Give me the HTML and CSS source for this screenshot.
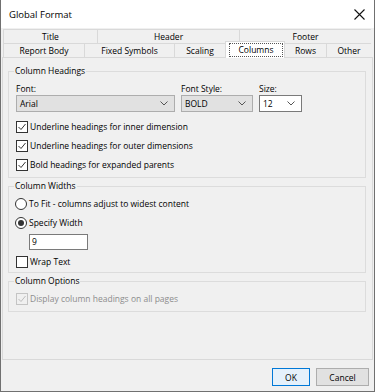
FILE: index.html
```html
<!DOCTYPE html>
<html lang="en">
<head>
	<meta charset="UTF-8">
	<title>Global Format</title>
<link rel="stylesheet" href="styles.css">
</head>
<body>
<div class="dialog">
	<div class="titlebar">
		<span class="title">Global Format</span>
		<svg class="close" width="11" height="11" viewBox="0 0 11 11"><path d="M0.5 0.5L10.5 10.5M10.5 0.5L0.5 10.5" stroke="#111" stroke-width="1.1" fill="none"/></svg>
	</div>

	<div class="tabs">
		<div class="tabrow row1">
			<div class="tab">Title</div>
			<div class="tab">Header</div>
			<div class="tab">Footer</div>
		</div>
		<div class="tabrow row2">
			<div class="tab">Report Body</div>
			<div class="tab">Fixed Symbols</div>
			<div class="tab">Scaling</div>
			<div class="tab active"><span>Columns</span></div>
			<div class="tab">Rows</div>
			<div class="tab">Other</div>
		</div>
	</div>

	<div class="panel">
		<fieldset class="group g1">
			<legend>Column Headings</legend>
			<div class="body">
				<div class="fonts">
					<div class="field">
						<label>Font:</label>
						<div class="combo w-font">Arial<svg class="chev" width="8" height="5" viewBox="0 0 8 5"><path d="M0.5 0.5L4 4L7.5 0.5" stroke="#555" fill="none"/></svg></div>
					</div>
					<div class="field">
						<label>Font Style:</label>
						<div class="combo w-style">BOLD<svg class="chev" width="8" height="5" viewBox="0 0 8 5"><path d="M0.5 0.5L4 4L7.5 0.5" stroke="#555" fill="none"/></svg></div>
					</div>
					<div class="field">
						<label>Size:</label>
						<div class="combo edit w-size">12<svg class="chev" width="8" height="5" viewBox="0 0 8 5"><path d="M0.5 0.5L4 4L7.5 0.5" stroke="#555" fill="none"/></svg></div>
					</div>
				</div>
				<div class="checks">
					<div class="row"><span class="box"><svg width="10" height="10" viewBox="0 0 10 10"><path d="M1.5 5L4 7.5L8.5 2" stroke="#333" stroke-width="1" fill="none"/></svg></span>Underline headings for inner dimension</div>
					<div class="row"><span class="box"><svg width="10" height="10" viewBox="0 0 10 10"><path d="M1.5 5L4 7.5L8.5 2" stroke="#333" stroke-width="1" fill="none"/></svg></span>Underline headings for outer dimensions</div>
					<div class="row"><span class="box"><svg width="10" height="10" viewBox="0 0 10 10"><path d="M1.5 5L4 7.5L8.5 2" stroke="#333" stroke-width="1" fill="none"/></svg></span>Bold headings for expanded parents</div>
				</div>
			</div>
		</fieldset>

		<fieldset class="group g2">
			<legend>Column Widths</legend>
			<div class="body">
				<div class="row"><span class="radio"></span>To Fit - columns adjust to widest content</div>
				<div class="row"><span class="radio on"></span>Specify Width</div>
				<div class="textbox">9</div>
				<div class="row wrap"><span class="box"></span>Wrap Text</div>
			</div>
		</fieldset>

		<fieldset class="group g3">
			<legend>Column Options</legend>
			<div class="body">
				<div class="row disabled"><span class="box"><svg width="10" height="10" viewBox="0 0 10 10"><path d="M1.5 5L4 7.5L8.5 2" stroke="#bdbdbd" stroke-width="1" fill="none"/></svg></span>Display column headings on all pages</div>
			</div>
		</fieldset>
	</div>

	<div class="footer">
		<button class="btn default">OK</button>
		<button class="btn">Cancel</button>
	</div>
</div>
</body>
</html>
```

FILE: styles.css
```css
* { margin:0; padding:0; box-sizing:border-box; }
body { width:375px; height:392px; background:#fff; font-family:"Open Sans", "Noto Sans", sans-serif; font-size:8.5px; color:#000; }

.dialog { width:375px; height:392px; border:1px solid #707070; border-top:0; background:#f0f0f0; display:flex; flex-direction:column; }

.titlebar { height:28px; flex:none; background:#fff; display:flex; align-items:center; justify-content:space-between; padding:0 9px 0 8px; }
.title { font-size:9.5px; }

/* tabs */
.tabs { margin:1px 3px 0 2px; flex:none; }
.tabrow { display:grid; height:14px; border-right:1px solid #d9d9d9; }
.row1 { grid-template-columns:94px 142px 132px; }
.row2 { grid-template-columns:81px 90px 51px 59px 42px 45px; }
.tab { border-top:1px solid #d9d9d9; border-left:1px solid #d9d9d9; display:flex; align-items:center; justify-content:center; line-height:12px; background:#f0f0f0; }
.tab.active { background:#fff; margin:-2px -1px -1px 0; border-right:1px solid #d9d9d9; position:relative; z-index:1; padding:1px 1px 1px 3px; }
.tab.active span { flex:1; align-self:stretch; display:flex; align-items:center; justify-content:center; border:1px dotted #555; }

/* panel */
.panel { flex:1; margin:0 1px; border:1px solid #d9d9d9; background:#f0f0f0; padding:7px 6px 0 5px; }
.group { border:1px solid #dcdcdc; min-width:0; }
.group legend { margin-left:5px; padding:0 1px; line-height:12px; }
.group + .group { margin-top:2px; }
.body { padding:0 0 0 7px; }

.g1 .body { padding-top:6px; padding-bottom:3px; }
.g2 .body { padding-top:2px; padding-bottom:1px; }
.g3 .body { padding-top:2px; padding-bottom:3px; }

.fonts { display:flex; gap:6px; }
.field label { display:block; height:12px; line-height:12px; }
.combo { height:17px; border:1px solid #adadad; background:#e1e1e1; display:flex; align-items:center; justify-content:space-between; padding:0 6px 0 3px; line-height:12px; }
.combo.edit { background:#fff; border-color:#7a7a7a; }
.w-font { width:159px; }
.w-style { width:72px; }
.w-size { width:43px; }

.checks { margin-top:5px; }
.row { height:19px; display:flex; align-items:center; gap:2px; line-height:12px; }
.box { width:12px; height:12px; border:1px solid #333; background:#fff; display:flex; align-items:center; justify-content:center; flex:none; }
.radio { width:12px; height:12px; border:1px solid #333; border-radius:50%; background:#fff; margin-left:-1px; flex:none; display:flex; align-items:center; justify-content:center; }
.radio.on::after { content:""; width:6px; height:6px; border-radius:50%; background:#333; }

.textbox { width:59px; height:16px; margin:2px 0 0 13px; border:1px solid #7a7a7a; background:#fff; padding-left:2px; line-height:14px; }
.row.wrap { margin-top:2px; }

.disabled { color:#8d8d8d; }
.disabled .box { border-color:#c4c4c4; background:#f0f0f0; }

/* buttons */
.footer { height:31px; flex:none; display:flex; justify-content:flex-end; gap:6px; padding:8px 5px 0 0; }
.btn { height:18px; font:inherit; border:1px solid #adadad; background:#e1e1e1; color:#000; width:53px; }
.btn.default { width:38px; border-color:#0078d7; background:#e5f1fb; }
```
